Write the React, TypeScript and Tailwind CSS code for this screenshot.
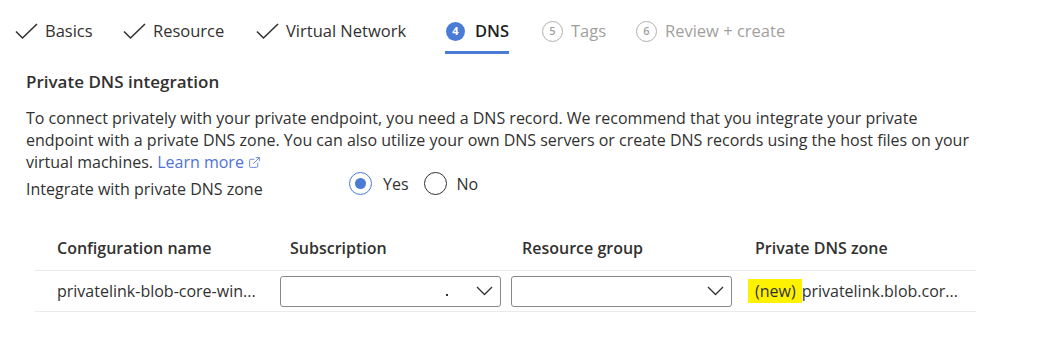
import { ExternalLink } from 'lucide-react'

const tabs = [
  { label: 'Basics', state: 'done', w: 'w-[108px]' },
  { label: 'Resource', state: 'done', w: 'w-[133px]' },
  { label: 'Virtual Network', state: 'done', w: 'w-[189px]' },
  { label: 'DNS', state: 'active', n: 4, w: 'w-[97px]' },
  { label: 'Tags', state: 'todo', n: 5, w: 'w-[94px]' },
  { label: 'Review + create', state: 'todo', n: 6, w: 'w-[180px]' },
]

function Chevron() {
  return (
    <svg width="17" height="10" viewBox="0 0 17 10" fill="none" stroke="#323130" strokeWidth="1.3">
      <polyline points="1,1 8.5,8.5 16,1" />
    </svg>
  )
}

function Dropdown({ dot }: { dot?: boolean }) {
  return (
    <div className="flex h-[31px] w-[221px] items-center justify-end rounded-[3px] border border-[#8a8886] bg-white pr-[7px]">
      {dot && <span className="mr-[28px] mt-[8px] h-[2px] w-[2px] bg-[#323130]" />}
      <Chevron />
    </div>
  )
}

export default function App() {
  return (
    <div className="h-[351px] w-[1038px] bg-white font-['Open_Sans',sans-serif] text-[16px] text-[#323130]">
      <div className="flex h-[54px] items-start pl-[15px] pt-[17px]">
        {tabs.map((t) => (
          <div key={t.label} className={`${t.w} flex shrink-0`}>
            <div
              className={`flex h-[37px] items-start border-b-[3px] ${
                t.state === 'active' ? 'border-[#4a7bd6]' : 'border-transparent'
              }`}
            >
              {t.state === 'done' && (
                <svg width="23" height="17" viewBox="0 0 23 17" fill="none" stroke="#323130" strokeWidth="1.6" className="mr-[7px] mt-[6px]">
                  <polyline points="1,8.5 7.5,15 22,1" />
                </svg>
              )}
              {t.state === 'active' && (
                <span className="ml-[1px] mr-[10px] mt-[5px] flex h-[19px] w-[19px] items-center justify-center rounded-full bg-[#4a7bd6] text-[11px] font-bold text-white">
                  {t.n}
                </span>
              )}
              {t.state === 'todo' && (
                <span className="mr-[8px] mt-[4px] flex h-[21px] w-[21px] items-center justify-center rounded-full border-[1.5px] border-[#b3b0ad] text-[11px] font-semibold text-[#a19f9d]">
                  {t.n}
                </span>
              )}
              <span
                className={`text-[16.5px] leading-[28px] ${
                  t.state === 'active' ? 'font-semibold text-[#201f1e]' : t.state === 'todo' ? 'text-[#a19f9d]' : ''
                }`}
              >
                {t.label}
              </span>
            </div>
          </div>
        ))}
      </div>

      <div className="pl-[26px]">
        <h2 className="mt-[16px] text-[17px] font-semibold leading-[24px]">Private DNS integration</h2>
        <p className="mt-[13px] leading-[22px] whitespace-nowrap">
          To connect privately with your private endpoint, you need a DNS record. We recommend that you integrate your private
          <br />
          endpoint with a private DNS zone. You can also utilize your own DNS servers or create DNS records using the host files on your
          <br />
          virtual machines.{' '}
          <a className="text-[#4f72d8]">
            Learn more <ExternalLink size={13} strokeWidth={1.5} className="-mt-[2px] inline" />
          </a>
        </p>
        <div className="flex h-[28px] items-start">
          <span className="mt-[5px] w-[323px] leading-[22px]">Integrate with private DNS zone</span>
          <label className="-mt-[1px] flex items-center gap-[11px] leading-[22px]">
            <span className="flex h-[23px] w-[23px] items-center justify-center rounded-full border-[1.5px] border-[#4a7bd6]">
              <span className="h-[11px] w-[11px] rounded-full bg-[#4a7bd6]" />
            </span>
            Yes
          </label>
          <label className="-mt-[1px] ml-[15px] flex items-center gap-[10px] leading-[22px]">
            <span className="h-[23px] w-[23px] rounded-full border-[1.5px] border-[#323130]" />
            No
          </label>
        </div>
      </div>

      <div className="ml-[35px] mt-[25px] w-[941px]">
        <div className="grid h-[44px] grid-cols-[245px_231px_234px_231px] items-center font-semibold">
          <span className="pl-[22px]">Configuration name</span>
          <span className="pl-[10px]">Subscription</span>
          <span className="pl-[11px]">Resource group</span>
          <span className="pl-[10px]">Private DNS zone</span>
        </div>
        <div className="grid h-[42px] grid-cols-[245px_231px_234px_231px] items-center border-y border-[#edebe9]">
          <span className="whitespace-nowrap pl-[22px]">privatelink-blob-core-win...</span>
          <Dropdown dot />
          <Dropdown />
          <span className="whitespace-nowrap pl-[3px]">
            <span className="bg-[#fff200] py-[1px] pl-[7px] pr-[6px]">(new)</span>privatelink.blob.cor...
          </span>
        </div>
      </div>
    </div>
  )
}
